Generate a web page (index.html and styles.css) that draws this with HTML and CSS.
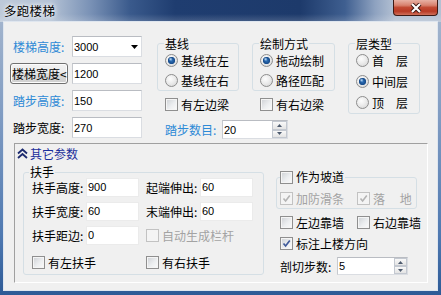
FILE: index.html
```
<!DOCTYPE html>
<html><head><meta charset="utf-8"><link rel="stylesheet" href="styles.css"></head>
<body>
<div class="win">
  <div class="titlebar">
    <span class="title">多跑楼梯</span>
    <div class="close"><svg width="12" height="10" viewBox="0 0 12 10"><path d="M2 1L10 9M10 1L2 9" stroke="#3b1410" stroke-width="4"/><path d="M2 1L10 9M10 1L2 9" stroke="#fff" stroke-width="2.2"/></svg></div>
  </div>
  <div class="client">
    <div class="top">
      <div class="params">
        <span class="lbl blue">楼梯高度:</span>
        <div class="edit combo"><span>3000</span><svg class="arrow" width="7" height="4" viewBox="0 0 7 4"><path d="M0 0H7L3.5 4Z" fill="#000"/></svg></div>
        <div class="btn">楼梯宽度&lt;</div>
        <div class="edit">1200</div>
        <span class="lbl blue">踏步高度:</span>
        <div class="edit">150</div>
        <span class="lbl">踏步宽度:</span>
        <div class="edit">270</div>
      </div>
      <div class="right">
        <div class="groups">
          <div class="ca">
            <fieldset class="grp"><legend>基线</legend>
              <div class="opt"><i class="rd on"></i>基线在左</div>
              <div class="opt"><i class="rd"></i>基线在右</div>
            </fieldset>
            <div class="chkrow"><i class="cb"></i>有左边梁</div>
          </div>
          <div class="cbx">
            <fieldset class="grp"><legend>绘制方式</legend>
              <div class="opt"><i class="rd on"></i>拖动绘制</div>
              <div class="opt"><i class="rd"></i>路径匹配</div>
            </fieldset>
            <div class="chkrow"><i class="cb"></i>有右边梁</div>
          </div>
          <div class="cc">
            <fieldset class="grp"><legend>层类型</legend>
              <div class="opt"><i class="rd"></i>首　层</div>
              <div class="opt"><i class="rd on"></i>中间层</div>
              <div class="opt"><i class="rd"></i>顶　层</div>
            </fieldset>
          </div>
        </div>
        <div class="steps"><span class="lbl2 blue">踏步数目:</span><div class="edit spin"><span>20</span><div class="spinbtn"><b><svg width="5" height="3" viewBox="0 0 5 3"><path d="M0 3L2.5 0L5 3Z" fill="#4d5a6e"/></svg></b><b><svg width="5" height="3" viewBox="0 0 5 3"><path d="M0 0H5L2.5 3Z" fill="#4d5a6e"/></svg></b></div></div></div>
      </div>
    </div>
    <div class="panel">
      <div class="phead"><svg width="11" height="11" viewBox="0 0 11 11"><path d="M1 5.5L5.5 1.5L10 5.5M1 10L5.5 6L10 10" stroke="#1c2a6e" stroke-width="1.8" fill="none"/></svg><span>其它参数</span></div>
      <div class="pbody">
        <fieldset class="grp rail"><legend>扶手</legend>
          <div class="rgrid">
            <span>扶手高度:</span><div class="pedit">900</div>
            <span>起端伸出:</span><div class="pedit">60</div>
            <span>扶手宽度:</span><div class="pedit">60</div>
            <span>末端伸出:</span><div class="pedit">60</div>
            <span>扶手距边:</span><div class="pedit">0</div>
            <div class="r span2 dis"><i class="cb dcb"></i>自动生成栏杆</div>
            <div class="r span2"><i class="cb"></i>有左扶手</div>
            <div class="r span2"><i class="cb"></i>有右扶手</div>
          </div>
        </fieldset>
        <div class="rcol">
          <fieldset class="grp slope"><legend><i class="cb"></i>作为坡道</legend>
            <div class="two s">
              <div class="r dis"><i class="cb dcb"><svg width="11" height="11" viewBox="0 0 11 11"><path d="M2.5 5.5L4.6 8L8.8 2.5" stroke="#b4b4b4" stroke-width="1.6" fill="none"/></svg></i>加防滑条</div>
              <div class="r dis"><i class="cb dcb"><svg width="11" height="11" viewBox="0 0 11 11"><path d="M2.5 5.5L4.6 8L8.8 2.5" stroke="#b4b4b4" stroke-width="1.6" fill="none"/></svg></i>落　 地</div>
            </div>
          </fieldset>
          <div class="two rr w1">
            <div class="r"><i class="cb"></i>左边靠墙</div>
            <div class="r"><i class="cb"></i>右边靠墙</div>
          </div>
          <div class="r rr w2"><i class="cb"><svg width="11" height="11" viewBox="0 0 11 11"><path d="M2.5 5.5L4.6 8L8.8 2.5" stroke="#3f5a9a" stroke-width="1.7" fill="none"/></svg></i>标注上楼方向</div>
          <div class="r rr w3"><span class="lbl3">剖切步数:</span><div class="edit spin spin2"><span>5</span><div class="spinbtn"><b><svg width="5" height="3" viewBox="0 0 5 3"><path d="M0 3L2.5 0L5 3Z" fill="#4d5a6e"/></svg></b><b><svg width="5" height="3" viewBox="0 0 5 3"><path d="M0 0H5L2.5 3Z" fill="#4d5a6e"/></svg></b></div></div></div>
        </div>
      </div>
    </div>
  </div>
</div>
</body></html>
```
FILE: styles.css
```
*{box-sizing:border-box}
html,body{margin:0;padding:0}
body{width:441px;height:295px;overflow:hidden;font-family:"Noto Sans CJK SC","Noto Sans",sans-serif;font-size:12px;color:#000;background:#2d5a96}
.win{width:441px;height:295px;display:flex;flex-direction:column;background:linear-gradient(180deg,#a9b9cf 0,#7f9bc2 40%,#4f79b1 80%,#2d5a96 100%)}
.titlebar{height:22px;flex:none;display:flex;align-items:flex-start;background:linear-gradient(180deg,rgba(255,255,255,0) 0,rgba(255,255,255,0) 14px,rgba(255,255,255,.18) 22px),linear-gradient(90deg,#bdc9d9 0,#b4c2d5 50px,#7a92b6 90px,#3a5a8c 130px,#1f3d70 175px,#1d3a6b 300px,#3f5f90 345px,#8ea2c0 375px,#b4c1d3 395px,#b4c1d3 441px)}
.title{flex:1;padding:3px 0 0 4px;font-size:12.5px;line-height:15px;letter-spacing:.3px;text-shadow:0 0 4px #fff,0 0 7px #fff}
.close{width:45px;height:16px;margin-right:3px;border:1px solid #3e1a14;border-top:0;border-radius:0 0 4px 4px;background:linear-gradient(180deg,#e8b1a4 0,#d8826f 35%,#c24a33 50%,#b83a25 75%,#d0705a 100%);display:flex;align-items:center;justify-content:center}
.client{flex:none;height:268px;margin:0 4px;background:#f0f0f0;box-shadow:0 0 0 1px #dfe6ef}
.top{display:flex;height:121px}
.params{display:grid;grid-template-columns:58px 70px;grid-template-rows:repeat(4,21px);column-gap:4px;row-gap:6px;margin:14px 0 0 6px;align-items:center}
.lbl{padding-left:3px;line-height:14px;white-space:nowrap}
.blue{color:#2e8ad6}
.edit{height:21px;border:1px solid;border-color:#b9bcc2 #dadde2 #dadde2 #c6c9ce;background:#fff;font:11px "Liberation Sans",Arial,sans-serif;color:#000;padding-left:1px;display:flex;align-items:center}
.combo .arrow{margin-left:auto;margin-right:3px}
.btn{height:21px;border:1px solid #707070;border-radius:3px;background:linear-gradient(180deg,#f2f2f2 0,#ebebeb 50%,#dddddd 50%,#cfcfcf 100%);padding-left:1px;line-height:19px;white-space:nowrap;box-shadow:inset 0 0 0 1px #fcfcfc}
.right{margin:15px 0 0 15px}
.groups{display:flex;gap:13px;align-items:flex-start}
.ca{width:82px}
.cbx{width:83px}
.cc{width:72px}
.grp{margin:0;min-width:0;border:1px solid #d5dfe5;border-radius:3px;padding:0 4px 0 6px}
.grp legend{padding:0 1px;line-height:13px;height:13px}
.opt{display:flex;align-items:center;height:20px;padding-left:1px;white-space:nowrap}
.cc .opt{height:21px}
.rd{width:13px;height:13px;border-radius:50%;margin-right:3px;flex:none;border:1px solid #8d8d8d;background:radial-gradient(circle at 40% 35%,#fdfdfd 0,#ececec 45%,#d2d2d2 100%)}
.rd.on{background:radial-gradient(circle at 42% 38%,rgba(200,230,255,.95) 0,rgba(200,230,255,0) 2px),radial-gradient(circle at 50% 50%,#2f74bd 0,#1b4f8f 3px,#2b5d96 3.4px,rgba(43,93,150,0) 4px),radial-gradient(circle at 40% 35%,#fdfdfd 0,#ececec 45%,#d2d2d2 100%)}
.chkrow{display:flex;align-items:center;height:14px;margin-top:6px;padding-left:8px;white-space:nowrap}
.cb{width:13px;height:13px;flex:none;margin-right:3px;border:1px solid #8f8f8f;background:linear-gradient(135deg,#cdd0d4 0,#eceef0 55%,#fbfbfb 100%);box-shadow:inset 0 0 0 1px #f5f5f5;display:flex;align-items:center;justify-content:center}
.cb.dcb{border-color:#c2c2c2;background:#f4f4f4;box-shadow:none}
.steps{display:flex;align-items:center;margin-top:6px;padding-left:8px}
.lbl2{width:57px;white-space:nowrap}
.spin{width:66px;height:19px}
.spinbtn{margin-left:auto;width:15px;height:100%;display:flex;flex-direction:column}
.spinbtn b{flex:1;display:flex;align-items:center;justify-content:center;border:1px solid #c3c8d0;background:linear-gradient(180deg,#f9f9f9,#e4e4e4)}
.panel{margin:0 0 0 10px;width:414px;height:140px;border:1px solid;border-color:#a0a0a0 #fff #fff #a0a0a0}
.phead{display:flex;align-items:center;height:13px;margin:3px 0 0 2px;color:#1c2f9b;gap:2px;line-height:13px}
.pbody{display:flex;align-items:flex-start;margin-top:6px}
.rail{margin-left:8px;width:241px;padding:0 10px 0 5px}
.rail legend{line-height:12px;height:12px}
.rgrid{display:grid;grid-template-columns:54px 60px 54px 53px;grid-template-rows:19px 19px 19px 24px;row-gap:5px;margin-left:3px;align-items:center;white-space:nowrap}
.pedit{width:53px;height:19px;background:#fff;border:1px solid #ebebeb;font:11px "Liberation Sans",Arial,sans-serif;line-height:14px;padding:1px 0 0 1px}
.span2{grid-column:span 2}
.r{display:flex;align-items:center;white-space:nowrap}
.dis{color:#a3a3a3}
.rcol{margin:5px 0 0 12px;width:141px}
.slope{width:141px;padding:0 0 1px 3px}
.slope legend{display:flex;align-items:center;padding:0 1px 0 0;line-height:12px;height:12px}
.two{display:grid;grid-template-columns:77px auto;align-items:center}
.two.s{margin-top:6px;height:18px}
.rr{padding-left:4px}
.w1{margin-top:5px;height:14px}
.w2{margin-top:8px;height:14px}
.w3{margin-top:7px;height:18px}
.lbl3{width:57px}
.spin2{width:71px;height:18px}
.spin2 .spinbtn{width:13px}
```
